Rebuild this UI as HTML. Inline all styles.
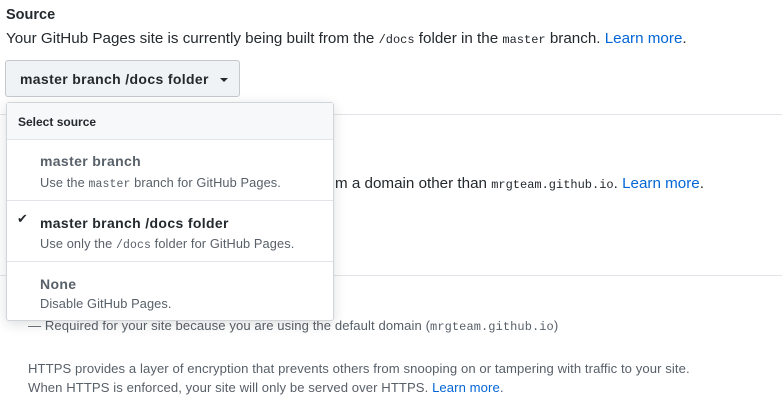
<!DOCTYPE html>
<html><head><style>
body{margin:0;width:782px;height:407px;background:#fff;font-family:"Liberation Sans",sans-serif;color:#24292e;position:relative;overflow:hidden}
.a{position:absolute;white-space:nowrap}
code{font-family:"Liberation Mono",monospace;font-size:12px}
.lk{color:#0366d6}
.hr{position:absolute;left:0;right:0;height:1px;background:#e1e4e8}
.btn{position:absolute;left:5px;top:60px;width:235px;height:37px;background:#eff3f6;border:1px solid #c5c9cd;border-radius:3px;box-sizing:border-box;font-size:14px;font-weight:bold;color:#24292e;letter-spacing:0.35px}
.menu{position:absolute;left:6px;top:102px;width:328px;height:219px;background:#fff;border:1px solid #d1d5da;border-radius:3px;box-shadow:0 3px 12px rgba(27,31,35,.15);box-sizing:border-box}
.sep{position:absolute;left:0;right:0;height:1px;background:#e1e4e8}
.t{font-size:14px;font-weight:bold;color:#586069;letter-spacing:0.35px}
.d{font-size:12.8px;color:#586069;letter-spacing:0.1px}
.s{font-size:13.1px;color:#586069;letter-spacing:0.08px}
</style></head><body>
<div class="a" style="left:6px;top:7px;font-size:14.5px;font-weight:bold">Source</div>
<div class="a" style="left:6px;top:30px;font-size:15.2px">Your GitHub Pages site is currently being built from the <code>/docs</code> folder in the <code>master</code> branch. <span class="lk">Learn more</span>.</div>
<div class="hr" style="top:114px"></div>
<div class="hr" style="top:275px"></div>
<div class="a" style="left:335px;top:175px;font-size:15.2px">m a domain other than <code>mrgteam.github.io</code>. <span class="lk">Learn more</span>.</div>
<div class="a s" style="left:28px;top:318px">— Required for your site because you are using the default domain (<code>mrgteam.github.io</code>)</div>
<div class="a s" style="left:28px;top:361px">HTTPS provides a layer of encryption that prevents others from snooping on or tampering with traffic to your site.</div>
<div class="a s" style="left:28px;top:380px">When HTTPS is enforced, your site will only be served over HTTPS. <span class="lk">Learn more</span>.</div>
<div class="btn"><span class="a" style="left:14px;top:10px">master branch /docs folder</span><span class="a" style="left:214px;top:17px;width:0;height:0;border-left:4px solid transparent;border-right:4px solid transparent;border-top:4px solid #24292e"></span></div>
<div class="menu">
<div style="position:absolute;left:0;right:0;top:0;height:36px;background:#f6f8fa;border-bottom:1px solid #e1e4e8"></div>
<div class="a" style="left:11px;top:12px;font-size:12px;font-weight:bold;color:#24292e">Select source</div>
<div class="a t" style="left:33px;top:50px">master branch</div>
<div class="a d" style="left:33px;top:72px">Use the <code style="font-size:11.5px">master</code> branch for GitHub Pages.</div>
<div class="sep" style="top:97px"></div>
<div class="a" style="left:10px;top:108px;font-size:13px;color:#24292e">✔</div>
<div class="a t" style="left:33px;top:112px;color:#24292e">master branch /docs folder</div>
<div class="a d" style="left:33px;top:133px">Use only the <code style="font-size:11.5px">/docs</code> folder for GitHub Pages.</div>
<div class="sep" style="top:158px"></div>
<div class="a t" style="left:33px;top:173px">None</div>
<div class="a d" style="left:33px;top:193px">Disable GitHub Pages.</div>
</div>
</body></html>
